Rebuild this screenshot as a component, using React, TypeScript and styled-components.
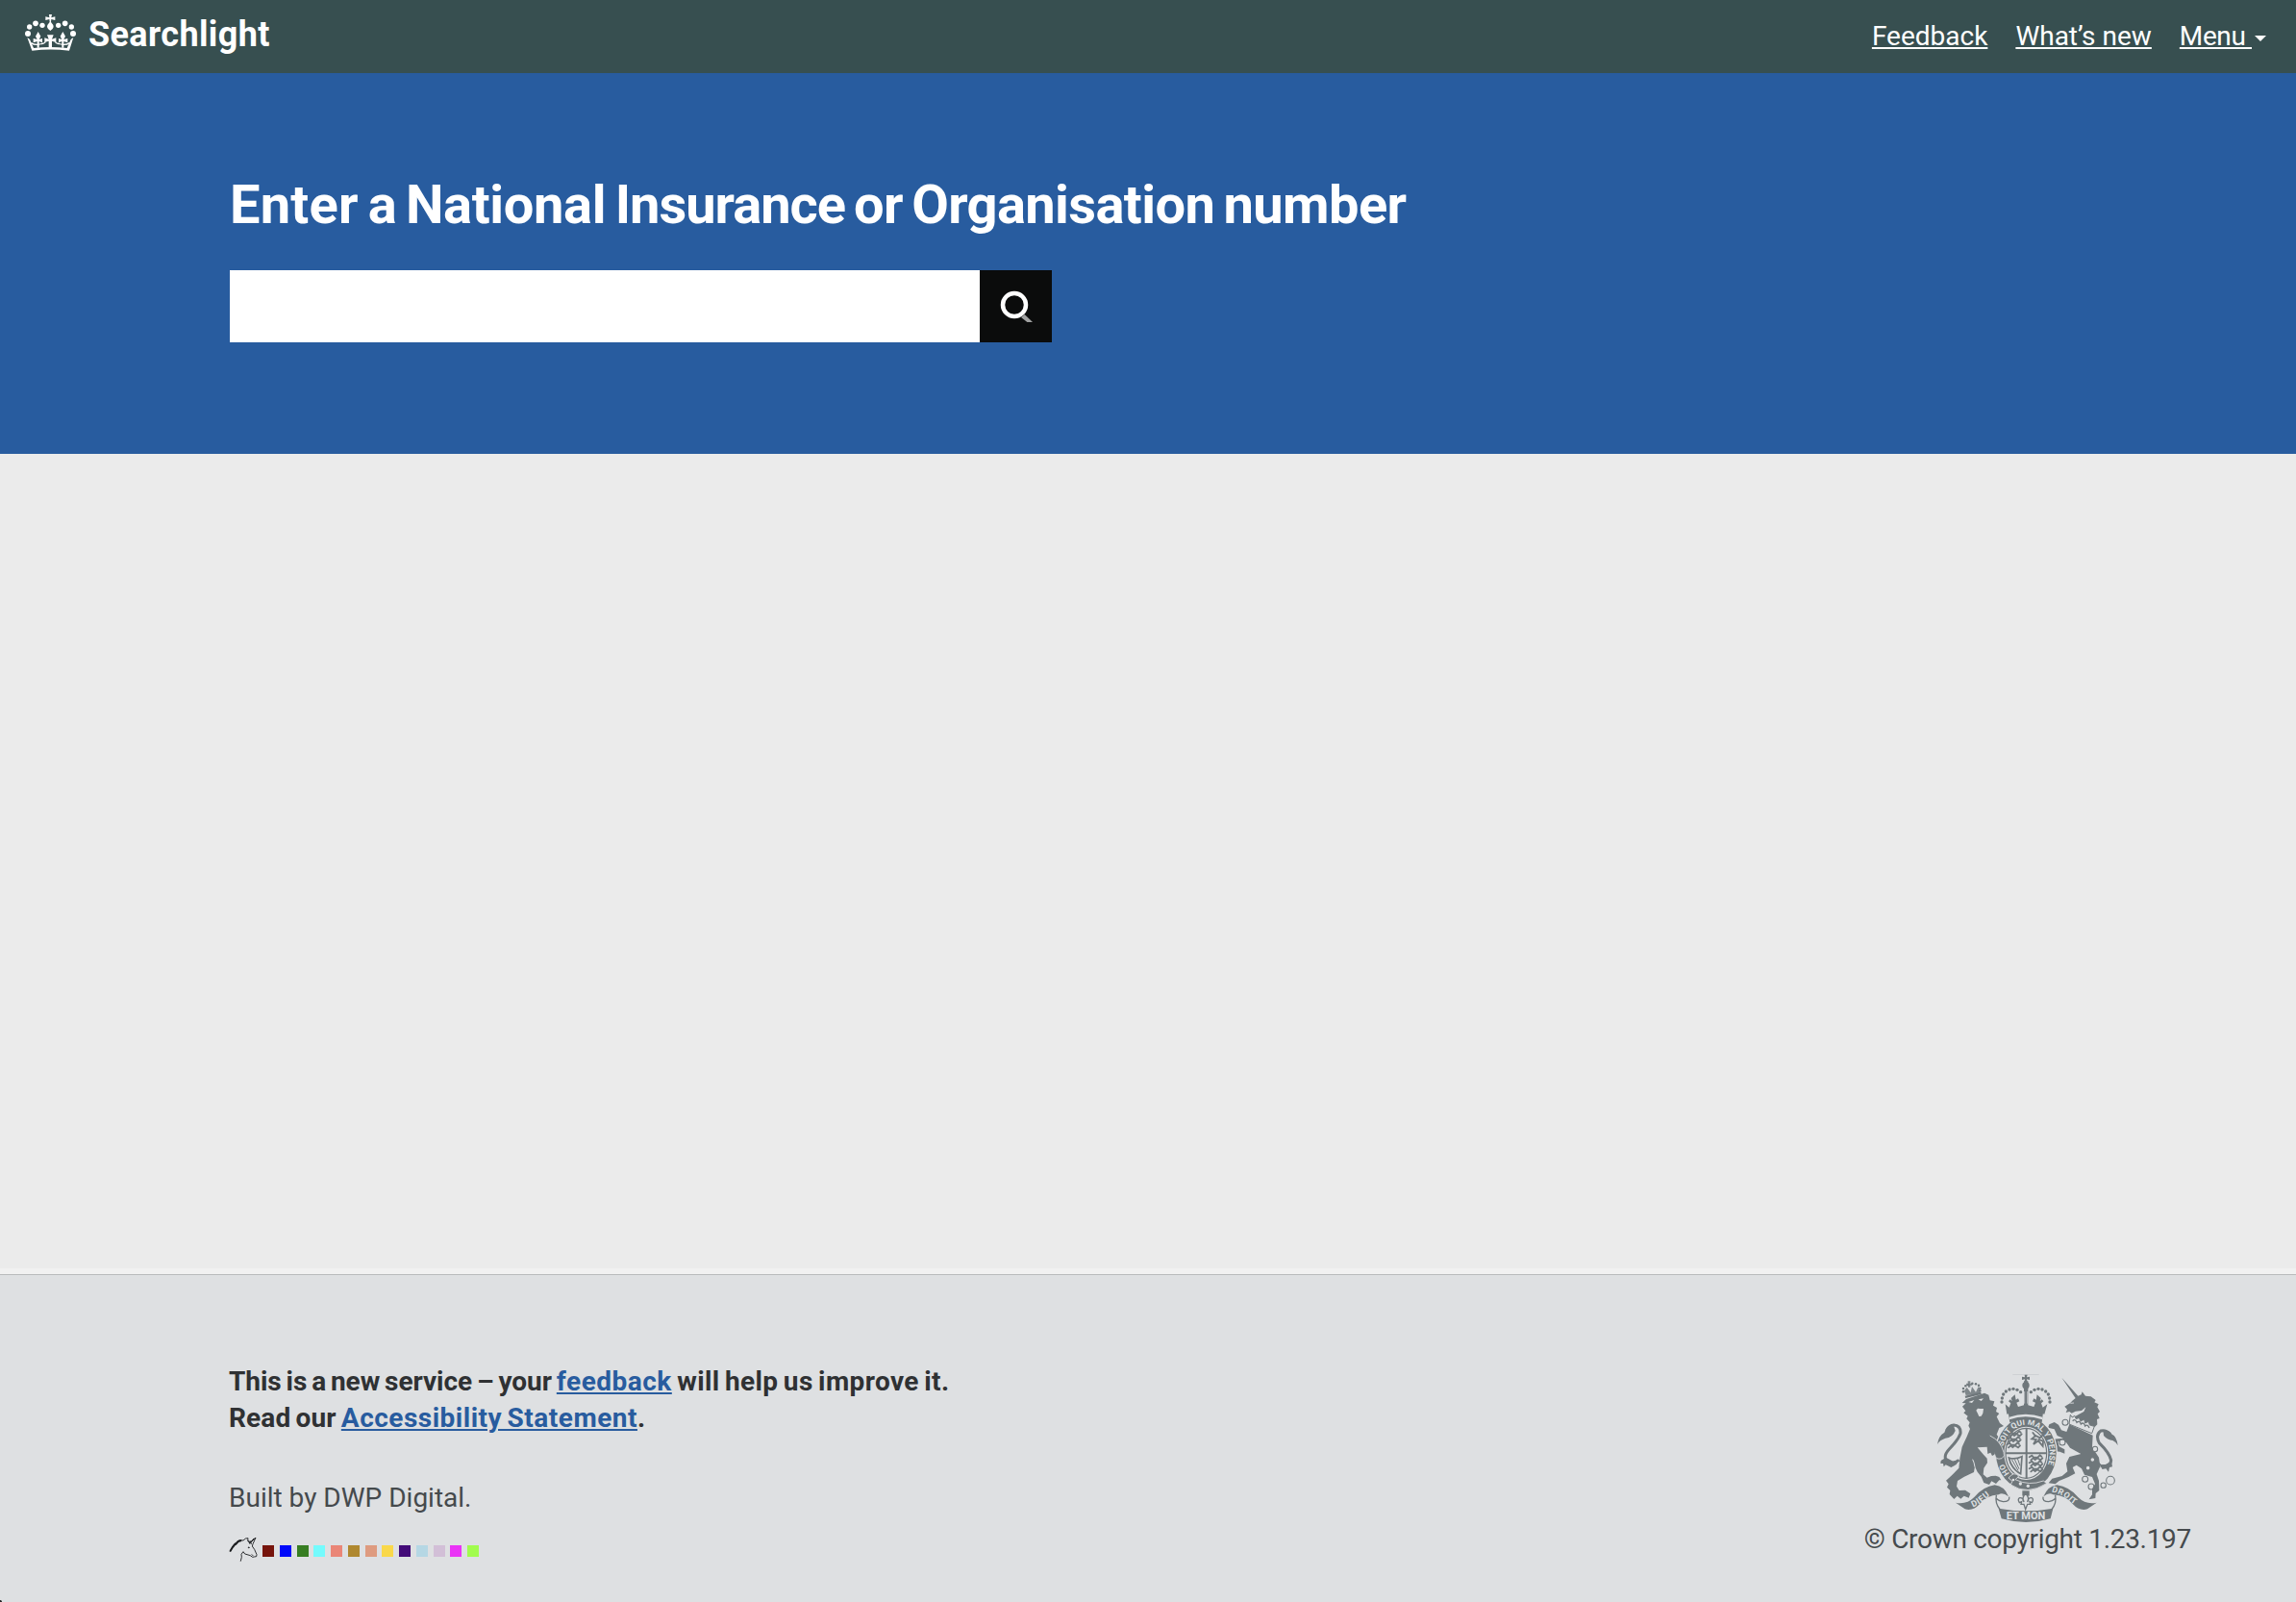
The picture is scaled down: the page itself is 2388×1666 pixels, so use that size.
import React from "react";
import styled, { createGlobalStyle } from "styled-components";

const INK = "#6f777b";
const PAPER = "#dee0e2";

const GlobalStyle = createGlobalStyle`
  * { box-sizing: border-box; }
  body {
    margin: 0;
    background: #f1f1f1;
    font-family: Roboto, "Liberation Sans", sans-serif;
    font-size: 28px;
  }
`;

const Page = styled.div`
  display: flex;
  flex-direction: column;
  min-height: 1666px;
`;

const Header = styled.header`
  display: flex;
  align-items: flex-start;
  justify-content: space-between;
  height: 76px;
  padding: 0 31px 0 26px;
  background: #374f50;
  color: #fff;
`;

const Brand = styled.a`
  display: flex;
  align-items: flex-start;
  gap: 13px;
  color: inherit;
`;

const BrandCrown = styled.svg`
  width: 53px;
  height: 40px;
  margin-top: 14px;
`;

const BrandName = styled.span`
  font-size: 36px;
  font-weight: 700;
  line-height: 42px;
  letter-spacing: 0.38px;
  padding-top: 15px;
`;

const Nav = styled.nav`
  display: flex;
  gap: 29px;
  padding-top: 22px;
`;

const NavLink = styled.a<{ $tracking?: number }>`
  display: flex;
  gap: 3px;
  color: #fff;
  line-height: 32px;
  letter-spacing: ${(p) => p.$tracking ?? 0}px;
  white-space: pre;
`;

const LinkText = styled.span`
  text-decoration: underline;
  text-decoration-thickness: 2px;
  text-underline-offset: 2px;
  text-decoration-skip-ink: none;
`;

const Caret = styled.span`
  align-self: flex-start;
  margin-top: 15px;
  border: 6px solid transparent;
  border-top-color: #fff;
  border-bottom-width: 0;
`;

const Hero = styled.section`
  display: flex;
  flex-direction: column;
  align-items: flex-start;
  height: 396px;
  padding: 104px 0 0 239px;
  background: #285c9f;
`;

const Title = styled.h1`
  margin: 0 0 35px;
  color: #fff;
  font-size: 56px;
  font-weight: 700;
  line-height: 66px;
  word-spacing: -4px;
  white-space: nowrap;
`;

const SearchForm = styled.form`
  display: flex;
  height: 75px;
`;

const SearchInput = styled.input`
  width: 780px;
  border: 0;
  border-radius: 0;
  padding: 0 16px;
  background: #fff;
  font: inherit;
`;

const SearchButton = styled.button`
  width: 75px;
  border: 0;
  padding: 0;
  background: #0b0c0c;
`;

const SearchIcon = styled.svg`
  display: block;
  width: 75px;
  height: 75px;
`;

const Main = styled.main`
  flex: 1;
  background: #ebebeb;
`;

const Footer = styled.footer`
  display: flex;
  align-items: flex-start;
  justify-content: space-between;
  height: 341px;
  margin-top: 6px;
  padding: 0 109px 0 238px;
  border-top: 1px solid #b9bbbc;
  background: radial-gradient(circle at 0 100%, #222 1.5px, transparent 2.5px) ${PAPER};
`;

const FooterMeta = styled.div`
  display: flex;
  flex-direction: column;
  padding-top: 92px;
`;

const Notice = styled.p`
  margin: 0 0 45px;
  color: #2f3133;
  font-weight: 700;
  line-height: 38px;
  word-spacing: -2px;
`;

const Phrase = styled.span<{ $tracking: number }>`
  letter-spacing: ${(p) => p.$tracking}px;
`;

const NoticeLink = styled.a`
  color: #285c9f;
  letter-spacing: 0.5px;
  text-decoration: underline;
  text-decoration-thickness: 2px;
  text-underline-offset: 2px;
`;

const Credit = styled.p<{ $tracking?: number }>`
  margin: 0;
  color: #454a4d;
  line-height: 38px;
  letter-spacing: ${(p) => p.$tracking ?? 0}px;
  white-space: nowrap;
`;

const SwatchRow = styled.div`
  display: flex;
  align-items: flex-start;
  margin-top: 21px;
`;

const Unicorn = styled.svg`
  width: 30px;
  height: 27px;
  margin-right: 5px;
`;

const Swatches = styled.ul`
  display: flex;
  gap: 5.78px;
  margin: 9px 0 0;
  padding: 0;
  list-style: none;
`;

const Swatch = styled.li<{ $color: string }>`
  width: 12px;
  height: 12px;
  background: ${(p) => p.$color};
`;

const Copyright = styled.div`
  display: flex;
  flex-direction: column;
  align-items: center;
  padding-top: 103px;
`;

const Crest = styled.svg`
  width: 188px;
  height: 155px;
  margin-bottom: -2px;
`;

const swatchColors = [
  "#76140c", "#0009fa", "#377e22", "#74fbfd", "#ea8677", "#af882f", "#de9b80",
  "#f9d84a", "#430b78", "#b5d7e4", "#d2bfd7", "#ea34f6", "#a1fc4e",
];

const crownPearls = [
  [87, 105, 9], [92, 84, 8], [111, 73, 8.5], [132, 79, 8],
  [182, 79, 8], [203, 73, 8.5], [223, 84, 8], [228, 105, 9],
];

function CrownLogo() {
  return (
    <BrandCrown viewBox="78 42 159 120" fill="#fff">
      {crownPearls.map(([x, y, r]) => <circle key={x} cx={x} cy={y} r={r} />)}
      <path d="M153 45h9l-2 10 12-3v11l-12-3-1 9q8 8 8 15-2 8-10 12-8-4-10-12 0-7 8-15l-1-9-12 3V52l12 3z" />
      <path d="M85 117l8 6 12 27q52-6 104 0l12-27 8-6-13 41q-58-7-116 0z" />
      <path d="M119 99l8 14-5 10 10-3v13l-10-4v20h-6v-20l-12 4v-13l12 3-5-10zM196 99l8 14-5 10 12-3v13l-12-4v20h-6v-20l-10 4v-13l10 3-5-10z" />
      <path d="M147 109h20l-5 13 13-4v14l-13-4v20h-10v-20l-13 4v-14l13 4z" />
      <path d="M97 134q14 10 38 1M217 134q-14 10-38 1M128 136q8 2 14-5M186 136q-8 2-14-5" fill="none" stroke="#fff" strokeWidth="4" />
    </BrandCrown>
  );
}

function UnicornMark() {
  return (
    <Unicorn viewBox="24 24 90 81" fill="none" stroke="#1a1c1e" strokeWidth="2.7" strokeLinejoin="round" strokeLinecap="round">
      <path d="M28 70l8-13 4-8 9-9 9-5 11 1 7-6 8-1-1 9 9 5 16-16-9 20-2 7 7 10 7 16-1 6-7 1-5 1-7-5-10-3-7-2-5-7-6 8 1 9-3 12" />
      <path d="M29 68l8-13M37 56l7-9M45 48l7-7M53 39l8-2" strokeWidth="6" />
      <path d="M89 44l13-14M86 37l3 9M94 47l-3-9M96 80l3 3" />
      <circle cx="86" cy="58" r="1.2" />
    </Unicorn>
  );
}

const chainLinks = [
  [825, 389, 13], [803, 404, 8], [765, 408, 9], [746, 385, 9],
  [755, 350, 7], [769, 324, 7], [777, 291, 8], [675, 270, 9], [684, 208, 9],
];

const crestPearls = [
  [486, 144, 5], [487, 132, 5], [491, 120, 5], [499, 111, 5], [510, 105, 5],
  [522, 103, 5], [534, 106, 5], [545, 113, 5],
];

const tinyPearls = [[366, 112], [366, 102], [373, 94], [382, 91], [394, 86], [405, 88], [414, 92], [418, 101], [418, 109]];

const quarterBeasts = [
  [507, 241], [504, 259], [502, 277], [572, 316], [572, 334], [572, 352],
];

function RoyalArms() {
  return (
    <Crest viewBox="285 57 564 465" fill={INK}>
      <defs>
        <path id="garterPath" d="M510 367A73 89 0 0 1 562 215A73 89 0 0 1 614 367" />
        <path id="dieuPath" d="M394 473Q420 463 438 445Q454 429 490 422" />
        <path id="droitPath" d="M640 424Q676 432 694 450Q712 469 745 474" />
      </defs>

      {/* lion supporter */}
      <path d="M352 325Q330 342 312 326Q304 310 322 291Q350 262 357 242Q359 218 336 216Q322 217 314 232" fill="none" stroke={INK} strokeWidth="9" />
      <path d="M285 276q4-27 22-37 3-17 28-23l6 17q-8 22-31 24-18 6-25 19zM296 327l16-10 22 12 20-6-10 16-16 9-17-8-6 6-2-10-8 0z" />
      <path d="M362 147L374 148 363 158 373 172 367 178 380 188 376 196 386 208 382 218 387 228 377 252 362 284 355 320 352 350 330 373 312 389 320 400 315 410 325 420 323 432 337 447 347 437 358 446 368 437 383 443 388 430 372 419 353 420 345 407 348 390 369 377 399 363 402 345 410 362 422 377 430 396 447 402 454 391 468 399 478 388 484 388 478 378 467 374 453 375 440 380 428 370 430 350 441 334 440 320 427 306 410 286 440 284 442 306 451 302 456 312 466 307 470 322 484 324 499 314 494 297 487 270 470 245 478 225 492 219 480 210 470 190 478 180 468 174 471 162 459 155 463 142 449 139 445 122 432 116 375 135z" />
      <path d="M371 125L421 113 422 120 373 132z" />
      <path d="M374 123l-5-14 8-11 12 17 4-19 12 17 8-17 6 16-2 8zM380 79h8v7h6v6h-6v6h-7v-6h-6v-6h5z" opacity="0.85" />
      {tinyPearls.map(([x, y], i) => <circle key={i} cx={x} cy={y} r="3.7" />)}
      <path d="M382 144l18-6-7 9zM413 136l16-3-7 8zM406 170l5-6 8 1 10 0-2 14-5 9-7 1-4-9z" fill={PAPER} />
      <path d="M395 323q5 9 7 24" fill="none" stroke={PAPER} strokeWidth="3" />

      {/* unicorn supporter */}
      <path d="M794 344Q826 346 827 326Q822 303 790 272Q777 246 795 234Q811 230 823 244" fill="none" stroke={INK} strokeWidth="9" />
      <path d="M848 279q-4-29-18-34-8-14-28-12l2 16q12 14 28 15 11 5 16 15zM789 332l8 8 14-1 17-11 3 18-9 2-3 14-8-10-12 2-2-10-12-3z" />
      <path d="M673 68L724 125 734 121 737 112 747 125 764 127 779 138 775 145 788 151 784 160 792 174 785 181 791 195 783 198 784 214 776 222 703 190 716 188 742 174 748 160 735 171 716 173 704 179 697 174 686 177 690 167 682 158 699 148 706 140 716 132z" />
      <path d="M697 214L770 248 768 285 789 317 793 345 782 369 789 390 790 420 779 429 778 444 758 448 768 433 768 415 777 400 768 378 744 371 735 352 719 341 707 348 715 367 694 378 665 390 653 400 632 397 643 383 674 375 691 361 687 336 697 315 733 306 699 287 687 270 661 266 665 283 682 292 682 305 667 299 654 298 648 277 640 271 645 260 678 257 659 249 650 229 630 224 634 214 650 207 663 215 672 232 688 237z" />
      <path d="M700 184L706 192 713 187 718 197 727 193 732 204 743 198 746 210 757 205 760 216 775 220 767 242 696 213z" fill={PAPER} stroke={INK} strokeWidth="3" />
      <path d="M707 203q8-8 13 5 9-8 13 5 9-8 13 6 8-7 13 6" fill="none" stroke={INK} strokeWidth="4" />
      <path d="M700 148l11-1" stroke={PAPER} strokeWidth="2.5" />
      <g stroke={INK} strokeWidth="3.2">
        {chainLinks.map(([x, y, r], i) => (
          <circle key={i} cx={x} cy={y} r={r} fill={i > 3 ? PAPER : "none"} />
        ))}
      </g>

      {/* garter and shield */}
      <ellipse cx="562" cy="304" rx="98" ry="116" fill={PAPER} />
      <ellipse cx="562" cy="304" rx="94" ry="112" />
      <ellipse cx="562" cy="304" rx="69" ry="83" fill={PAPER} />
      <ellipse cx="562" cy="304" rx="64" ry="78" fill="none" stroke={INK} strokeWidth="3.5" />
      <path d="M560 226h6v157h-6zM498 301h128v6H498z" />
      <g fill="none" stroke={INK} strokeWidth="5.5" strokeLinecap="round">
        {quarterBeasts.map(([x, y], i) => (
          <path key={i} d={`M${x} ${y}l8-5 5 6 14-1 6-6 5 4M${x + 5} ${y + 9}l7-6 6 5 7-5 10 6 6-6`} />
        ))}
        <path d="M583 240l8 10-11 9 13 2-8 15 15-11 14 17 1-15M592 249l13 7 11-11M601 261l12 4" />
      </g>
      <path d="M508 318q18 7 41-4l-4 54q-29-15-37-50z" fill={PAPER} stroke={INK} strokeWidth="5" />
      <path d="M517 323l20 35M526 323l14 30M535 320l8 23" stroke={INK} strokeWidth="3" />
      <text fill={PAPER} fontSize="25" fontWeight="700" letterSpacing="0.2">
        <textPath href="#garterPath">HO<tspan dx="54">SOIT QUI MAL Y PENSE</tspan></textPath>
      </text>
      <path d="M449 249q34 16 43 52 6 12-6 19-20 6-22-13" stroke={PAPER} strokeWidth="2.5" />
      <path d="M507 381q17-22 32-6-5 7-11 11 43 21 88 4l10 8q-61 39-112 4l5-11z" stroke={PAPER} strokeWidth="2.5" />
      <g fill={PAPER}>
        <circle cx="522" cy="387" r="4" />
        <circle cx="544" cy="399" r="5" />
        <circle cx="568" cy="406" r="5" />
      </g>

      {/* crown */}
      <path d="M506 176Q560 158 615 176L611 208Q560 190 511 208z" />
      <path d="M509 191Q560 173 613 191L612 199Q560 181 510 199z" fill={PAPER} />
      <path d="M497 151l12 10 5-13-7-6 5-6 6 6-3-10 12-11 3 16 7-4 4 9-9 4 5 13 18-5V79h13v75l18 5 5-13-9-4 4-9 7 4 3-16 12 11-3 10 6-6 5 6-7 6 5 13 14-10-9 31q-56-20-117 0z" />
      <path d="M557 111v38M566 111v38" stroke={PAPER} strokeWidth="2" />
      {crestPearls.map(([x, y, r], i) => (
        <g key={i}>
          <circle cx={x} cy={y} r={r} />
          <circle cx={1122 - x} cy={y} r={r} />
        </g>
      ))}
      <circle cx="561" cy="92" r="11" />
      <path d="M557 59h9l-2 8 9-2v10l-9-2 2 12h-10l2-12-9 2V65l9 2z" />
      <path d="M520 58h82" stroke={INK} strokeWidth="1" opacity="0.5" />

      {/* motto ribbon */}
      <path d="M342 458Q376 465 400 441Q428 408 464 403Q494 406 507 439Q488 424 476 433Q437 437 417 462Q397 485 371 478z" />
      <path d="M782 458Q748 465 724 441Q696 408 658 403Q630 406 616 439Q634 424 646 433Q688 437 707 462Q728 485 753 478z" />
      <path d="M469 434Q464 451 490 455Q512 455 509 440M469 436Q464 460 481 480M653 434Q658 451 632 455Q612 455 615 440M653 436Q658 460 641 480" fill="none" stroke={INK} strokeWidth="4" />
      <path d="M476 476Q561 492 646 476L638 508Q561 530 485 508z" />
      <g fill={PAPER} fontWeight="700">
        <text fontSize="27" letterSpacing="2"><textPath href="#dieuPath" startOffset="2">DIEU</textPath></text>
        <text fontSize="26" letterSpacing="2"><textPath href="#droitPath" startOffset="1">DROIT</textPath></text>
        <text x="561" y="511" fontSize="33" textAnchor="middle">ET MON</text>
      </g>
      <path d="M550 421h22v16h-22z" />
      <path d="M560 430q-13 13-5 26-2-14-13-13-8 4-1 15l7-3-2 8h9l5 16 6-16h9l-2-8 7 3q7-11-1-15-11-1-13 13 8-13-6-26z" fill={PAPER} stroke={INK} strokeWidth="4" />
    </Crest>
  );
}

export default function App() {
  return (
    <Page>
      <GlobalStyle />
      <Header>
        <Brand>
          <CrownLogo />
          <BrandName>Searchlight</BrandName>
        </Brand>
        <Nav>
          <NavLink><LinkText>Feedback</LinkText></NavLink>
          <NavLink><LinkText>What’s new</LinkText></NavLink>
          <NavLink $tracking={-0.4}><LinkText>{"Menu "}</LinkText><Caret /></NavLink>
        </Nav>
      </Header>
      <Hero>
        <Title>
          <Phrase $tracking={0.2}>Enter </Phrase>
          <Phrase $tracking={-0.35}>a National </Phrase>
          <Phrase $tracking={-1}>Insurance </Phrase>
          <Phrase $tracking={-0.6}>or Organisation number</Phrase>
        </Title>
        <SearchForm>
          <SearchInput type="text" />
          <SearchButton type="button">
            <SearchIcon viewBox="-3 33 225 225">
              <path d="M126 180l11-9 25 24h-17z" fill="#a0a1a1" />
              <circle cx="105" cy="141" r="36" fill="none" stroke="#fff" strokeWidth="13.5" />
            </SearchIcon>
          </SearchButton>
        </SearchForm>
      </Hero>
      <Main />
      <Footer>
        <FooterMeta>
          <Notice>
            <Phrase $tracking={-0.05}>This is a new service – your </Phrase>
            <NoticeLink>feedback</NoticeLink>
            <Phrase $tracking={0.4}> will help us improve it.</Phrase>
            <br />
            <Phrase $tracking={0.15}>Read our </Phrase>
            <NoticeLink>Accessibility Statement</NoticeLink>.
          </Notice>
          <Credit>Built by DWP Digital.</Credit>
          <SwatchRow>
            <UnicornMark />
            <Swatches>
              {swatchColors.map((color) => <Swatch key={color} $color={color} />)}
            </Swatches>
          </SwatchRow>
        </FooterMeta>
        <Copyright>
          <RoyalArms />
          <Credit $tracking={-0.3}>© Crown copyright 1.23.197</Credit>
        </Copyright>
      </Footer>
    </Page>
  );
}
